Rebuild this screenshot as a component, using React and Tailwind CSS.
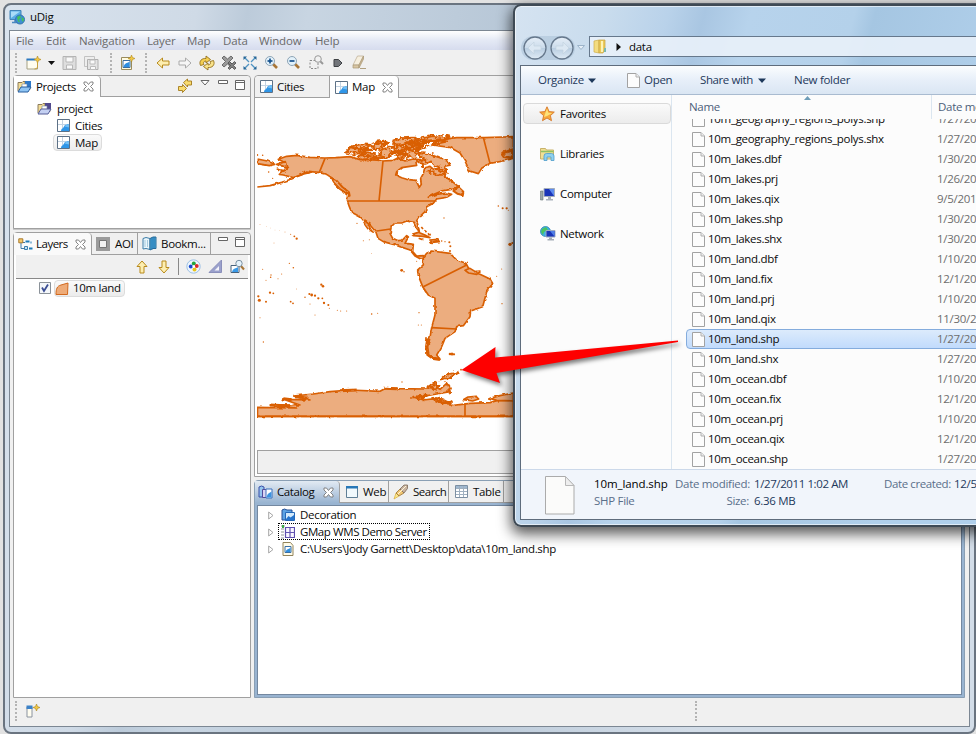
import React from "react";

/* ---------- icons ---------- */

function Svg({ w = 16, h = 16, children, className = "" }) {
  return (
    <svg width={w} height={h} viewBox={`0 0 ${w} ${h}`} fill="none" className={`shrink-0 ${className}`}>
      {children}
    </svg>
  );
}

const Logo = () => (
  <Svg>
    <path d="M1 1.500h11v9H1z" fill="#5aaee6" stroke="#4285b8" />
    <path d="M2 2.500h9L2 9z" fill="#a9dcf8" />
    <path d="M3 13.500h7M6 11v2" stroke="#4a88c0" strokeWidth="1.500" />
    <circle cx="11" cy="10.500" r="4.500" fill="#3f8fd4" stroke="#3474ae" />
    <path d="M8 8l3-1.500 1 2-2 2 1 3-2-1zM13 8l2 2-1 3-1.500-2z" fill="#41c25a" />
  </Svg>
);

const MapIcon = () => (
  <Svg w={13} h={13}>
    <path d="M.5.5h12v12H.5z" fill="#fff" stroke="#5d7186" />
    <path d="M1 5.500h8M5.500 1v8" stroke="#c3d3e2" />
    <path d="M4 12c.5-3 2-2.500 3-4.500S9 5.500 12 5v7z" fill="#2f96e8" />
    <path d="M7.500 7.500C8.500 6 9.500 5.500 12 5v3.500z" fill="#72bff5" />
  </Svg>
);

const ProjectIcon = ({ dim }) => (
  <Svg w={15} h={13}>
    <path d="M1 11V2.500h4l1-1h2v3h5v5" fill="#f4dd96" stroke="#8c7c5c" />
    <path d="M8 1h6v6H8z" fill={dim ? "#51498c" : "#2e79c8"} />
    <path d="M5 4h5v5H5z" fill="#fff" stroke="#7287a0" strokeWidth=".6" />
    <path d="M1 12l3-5h10L11 12z" fill={dim ? "#c4d0f2" : "#8fc5f4"} stroke={dim ? "#565e98" : "#285f9f"} />
  </Svg>
);

const CloseX = () => (
  <Svg w={11} h={11}>
    <path d="M1 1h2.500l2 2.500L7.500 1H10v2L7.500 5.500 10 8v2H7.500l-2-2.500L3.500 10H1V8l2.500-2.500L1 3z" fill="#fff" stroke="#777" strokeWidth=".9" />
  </Svg>
);

const MinIcon = () => (
  <Svg w={10} h={4}><path d="M.5.5h9v3h-9z" fill="#fff" stroke="#666" /></Svg>
);
const MaxIcon = () => (
  <Svg w={10} h={10}><path d="M.5.5h9v9h-9zM.5 2.500h9" fill="#fff" stroke="#666" /></Svg>
);

const NewIcon = () => (
  <Svg w={15} h={14}>
    <path d="M1 3.500h10.500v9.500H1z" fill="#fffdf0" stroke="#a5a184" />
    <path d="M.5 2.500h9v2h-9z" fill="#2b78c2" />
    <path d="M11.500 0l1 2.500 2.500 1-2.500 1-1 2.500-1-2.500-2.500-1 2.500-1z" fill="#f1c742" stroke="#b28a20" strokeWidth=".6" />
    <path d="M11.500 6v5q0 2-3 2" stroke="#c8a23e" />
  </Svg>
);
const Save = ({ multi }) => (
  <Svg w={15} h={14}>
    {multi && <path d="M.5.5h10v10H.5z" fill="#eee" stroke="#c2c2c2" />}
    {multi ? (
      <><path d="M3.500 3.500h10.500v10H3.500z" fill="#e4e4e4" stroke="#b0b0b0" /><path d="M6 4h5v4H6zM6.500 10.500h5v3h-5z" fill="#fafafa" stroke="#bcbcbc" /></>
    ) : (
      <><path d="M1 .5h13v13H1z" fill="#dedede" stroke="#b4b4b4" /><path d="M4 1h7v5H4zM4.500 9h6v4h-6z" fill="#fafafa" stroke="#b8b8b8" /></>
    )}
  </Svg>
);
const NewMap = () => (
  <Svg w={15} h={15}>
    <path d="M1.500 2.500h10v12h-10z" fill="#fffbe0" stroke="#9a8b5c" />
    <path d="M3 5.500h7v7H3z" fill="#fff" stroke="#3c6c9c" />
    <path d="M3.500 12c1-4 3-4 6-5v5z" fill="#2f8fe0" />
    <path d="M11.500 0l1 2.500 2.500 1-2.500 1-1 2.500-1-2.500-2.500-1 2.500-1z" fill="#f1c742" stroke="#b28a20" strokeWidth=".6" />
  </Svg>
);
const Arrow = ({ grey, right, up, down }) => (
  <Svg w={14} h={14}>
    <path
      d="M1 7l5.500-5v3H13v4H6.500v3z"
      fill={grey ? "#f6f6f6" : "#fdeeb0"}
      stroke={grey ? "#aaa" : "#b88a1c"}
      strokeLinejoin="round"
      transform={right ? "rotate(180 7 7)" : up ? "rotate(90 7 7)" : down ? "rotate(-90 7 7)" : undefined}
    />
  </Svg>
);
const Refresh = () => (
  <Svg>
    <path d="M1.500 10.500C-.5 6 3 3 7 3.500V1L11.500 4.500 7 8V6C4.500 6 4 8 5 9.500z" fill="#f5cf50" stroke="#94701c" strokeWidth=".9" />
    <path d="M14.500 5.500c2 4.500-1.500 7.500-5.500 7V15l-4.500-3.500L9 8v2c2.500 0 3-2 2-3.500z" fill="#f9e38a" stroke="#94701c" strokeWidth=".9" />
  </Svg>
);
const Stop = () => (
  <Svg>
    <path d="M1 3l2-2 3.500 3L10 1l2 2-3.500 3.500L12 10l-2 2-3.500-3L3 12l-2-2 3.500-3.500z" fill="#9a9a9a" stroke="#555" strokeWidth=".8" />
    <path d="M7 8l1.500-1.500L11 9l2.500-2.500L15 8l-2.500 2.500L15 13l-1.500 1.500L11 12l-2.500 2.500L7 13l2.500-2.500z" fill="#808080" stroke="#4c4c4c" strokeWidth=".8" />
  </Svg>
);
const Extent = () => (
  <Svg w={14} h={14}>
    <path d="M2 2l4 4M12 2L8 6M2 12l4-4M12 12L8 8" stroke="#4f93c2" strokeWidth="1.300" />
    <path d="M.5 4V.5H4zM10 .5h3.500V4zM.5 10v3.500H4zM10 13.500h3.500V10z" fill="#246596" />
  </Svg>
);
const Zoom = ({ minus }) => (
  <Svg w={15} h={15}>
    <path d="M9 9l4 4" stroke="#a87536" strokeWidth="2.600" />
    <circle cx="6" cy="6" r="4.500" fill="#e2f1fa" stroke="#8ea4b6" />
    <path d="M3.500 6h5" stroke="#15508c" strokeWidth="1.700" />
    {!minus && <path d="M6 3.500v5" stroke="#15508c" strokeWidth="1.700" />}
  </Svg>
);
const ZoomSel = () => (
  <Svg w={15} h={15}>
    <path d="M1 5.500h8v8H1z" stroke="#888" strokeDasharray="2 1.500" />
    <path d="M11 6l3 3" stroke="#999" strokeWidth="2" />
    <circle cx="9" cy="4" r="3.300" fill="#f2f2f2" stroke="#999" />
  </Svg>
);
const Tag = () => (
  <Svg w={10} h={10}><path d="M1 1.500h4.500L9 5 5.500 8.500H1z" fill="#72757a" stroke="#3e4145" /></Svg>
);
const Eraser = () => (
  <Svg w={16} h={15}>
    <path d="M5.500 1h6L7 10H1z" fill="#f6efdf" stroke="#b9aa90" strokeWidth=".7" />
    <path d="M1 10h6v3H1z" fill="#d9c6a4" stroke="#a99876" strokeWidth=".7" />
    <path d="M11.500 1v3L7 13v-3z" fill="#cbb894" stroke="#a99876" strokeWidth=".7" />
    <path d="M8 13.500h6" stroke="#b0a080" />
  </Svg>
);
const LinkArrows = () => (
  <Svg w={14} h={15}>
    <path d="M5.500 4.500L9.500 1v2h4v4h-4v2z" fill="#f9dc70" stroke="#a47a1c" strokeWidth=".9" />
    <path d="M8.500 10.500l-4 4v-2h-4v-4h4v-2z" fill="#f9dc70" stroke="#a47a1c" strokeWidth=".9" />
  </Svg>
);
const LayersIcon = () => (
  <Svg w={15} h={13}>
    <path d="M3 5v5.500h4M4 4.500h3" stroke="#3e79a8" />
    <path d="M.8.800h4v4h-4z" fill="#f7ca6c" stroke="#a8792c" />
    <path d="M7.500 3.500h4M12.500 4.500h1" stroke="#1e7ab6" strokeWidth="2" />
    <path d="M6.500 8.500h3v3h-3z" fill="#c5e4f5" stroke="#3c7dac" />
    <path d="M11 10.500h3.500" stroke="#1e7ab6" strokeWidth="2" />
  </Svg>
);
const AoiIcon = () => (
  <Svg w={14} h={14}><path d="M0 0h14v14H0z" fill="#9b9b9b" /><path d="M3.500 3.500h7v7h-7z" fill="#f3f3f3" stroke="#777" /></Svg>
);
const BookIcon = () => (
  <Svg w={15} h={15}>
    <path d="M1 2.500l3-1 4 1v11l-4-1-3 .5z" fill="#eaf6fc" stroke="#3c7da8" />
    <path d="M8 2.500l3-1.500h3v11.500h-3L8 14z" fill="#4eabdd" stroke="#286a98" />
    <path d="M10 1.500v12M12 1v11.500" stroke="#1f6fa8" /><path d="M3 4v7M5.500 4v7" stroke="#a5cade" />
  </Svg>
);
const Palette = () => (
  <Svg w={15} h={15}>
    <circle cx="7.500" cy="7.500" r="6.700" fill="#eef5fc" stroke="#9cc0e4" />
    <circle cx="4.800" cy="7.500" r="2" fill="#1747cf" /><circle cx="7.800" cy="4.500" r="2" fill="#22a53c" />
    <circle cx="10.700" cy="7" r="2" fill="#d92a2a" /><circle cx="8.500" cy="10.500" r="2" fill="#e8c418" />
    <circle cx="7.800" cy="7.500" r="1.300" fill="#fff" />
  </Svg>
);
const Ruler = () => (
  <Svg w={15} h={15}><path d="M1 13.500L13.500 1v12.500z" fill="#9aa0cc" stroke="#8a8fba" /><path d="M6.500 11.500L11 7v4.500z" fill="#f4f4fa" /></Svg>
);
const LayerZoom = () => (
  <Svg w={15} h={15}>
    <path d="M1 6.500h8v7H1z" fill="#fff" stroke="#47627c" /><path d="M2 13c1-4 3-3 6-5v5z" fill="#3a9ae8" />
    <path d="M10.500 6.500l3.500 4" stroke="#a87536" strokeWidth="2" /><circle cx="9" cy="4.500" r="3.200" fill="#e6f3fb" stroke="#788ea0" />
  </Svg>
);
const LandIcon = () => (
  <Svg w={14} h={13}><path d="M1 12.500C1 7 2 4 6 3l7-2-.5 11.500z" fill="#eeab78" stroke="#d2691e" /></Svg>
);
const CatalogIcon = () => (
  <Svg w={15} h={14}>
    <path d="M1 2q2.500-2 5 0v10H1z" fill="#93c5ee" stroke="#3a4fa8" />
    <path d="M4.500 4.500h5v8h-5z" fill="#d9d3f2" stroke="#524b9a" />
    <path d="M8 4h6v9H8z" fill="#fff" stroke="#3a6ebc" /><path d="M8.500 12.500c1-4 2-4 5-6v6z" fill="#3c93e0" />
  </Svg>
);
const WebIcon = () => (
  <Svg w={12} h={12}><path d="M.5.5h11v11H.5z" fill="#f1f9fd" stroke="#5f7f96" /><path d="M0 0h12v2.500H0z" fill="#2878b8" /></Svg>
);
const SearchIcon = () => (
  <Svg>
    <path d="M1 15l2-6 3 3z" fill="#fbe88c" stroke="#d8ac3a" strokeWidth=".7" />
    <path d="M3 9l4-4 4 4-5 3z" fill="#f0c674" stroke="#9a7432" strokeWidth=".8" />
    <path d="M7 5l4-4h3.500v3.500l-3.500 4.500z" fill="#c9b4a0" stroke="#7d6a58" strokeWidth=".8" />
    <path d="M5 10l8-8" stroke="#fff4d8" />
  </Svg>
);
const TableIcon = () => (
  <Svg w={13} h={13}>
    <path d="M.5.5h12v12H.5z" fill="#fff" stroke="#7c8fa2" /><path d="M1 1h11v2H1z" fill="#9fb8d0" />
    <path d="M1 3.500h11M1 6.500h11M1 9.500h11M4.500 1v11M8.500 1v11" stroke="#a0b0c0" />
  </Svg>
);
const DecoIcon = () => (
  <Svg w={14} h={13}>
    <path d="M1 2q2.500-2 5 0h5v10H1z" fill="#5ba2e4" stroke="#264f94" />
    <path d="M4.500 4.500h9v8h-9z" fill="#d3eafc" stroke="#2468b8" /><path d="M5 11l2.500-3 2 1.500L13 7v5H5z" fill="#2674cc" />
  </Svg>
);
const WmsIcon = () => (
  <Svg w={14} h={14}>
    <path d="M0 1h4M0 4h3M0 7h3M0 10h3M0 13h3" stroke="#8f9498" /><path d="M1 0h2v3H1z" fill="#3cac48" />
    <path d="M4.500 2.500h9v10h-9z" fill="#f8f5ff" stroke="#5d4fae" strokeWidth="1.200" /><path d="M9 3v9M5 7.500h8" stroke="#6456b4" strokeWidth="1.200" />
  </Svg>
);
const ShpIcon = () => (
  <Svg w={12} h={14}>
    <path d="M1 .5h7.500l2.500 3v10H1z" fill="#fffbe8" stroke="#92835a" /><path d="M3 4.500h6v6H3z" fill="#fff" stroke="#3a6ea4" />
    <path d="M3.500 10c1-3 3-3 5-4v4z" fill="#2f8fe0" />
  </Svg>
);
const Expander = () => (
  <Svg w={6} h={9} className="translate-y-px"><path d="M.7 1v7l4.300-3.500z" fill="#fff" stroke="#a5a5a5" /></Svg>
);
const FileIcon = () => (
  <Svg w={13} h={15}>
    <path d="M.5.5h8.500l3.500 3.500v10.500H.5z" fill="#fcfcfc" stroke="#a2a2a2" /><path d="M9 .5V4h3.500" fill="#eee" stroke="#b0b0b0" />
  </Svg>
);
const Star = () => (
  <Svg>
    <path d="M8 .8l2.100 4.800 5.200.5-3.900 3.500 1.100 5.100L8 12l-4.500 2.700 1.100-5.100L.7 6.100l5.200-.5z" fill="#f8a83c" stroke="#d5772a" strokeWidth=".9" />
    <path d="M8 2.500l1.300 4.200 4 .3L8 10 5 11l1-3z" fill="#fde27a" />
  </Svg>
);
const Libraries = () => (
  <Svg w={15} h={14}>
    <path d="M.5 12V1.500h5l1 1.500h7v9z" fill="#f1df94" stroke="#c8b26a" /><path d="M1 4.500h12.500" stroke="#8fc064" strokeWidth="1.500" />
    <path d="M4 13.500V9q0-2.500 2.500-2.500h5Q14 6.500 14 9v4.500h-3V10H7v3.500z" fill="#8fd0ee" stroke="#4f9dca" strokeWidth=".8" />
  </Svg>
);
const Computer = () => (
  <Svg w={15} h={14}>
    <path d="M.5 4h2.500v9H.5z" fill="#9ba7a8" stroke="#697577" strokeWidth=".6" /><path d="M4 1.500h10.500v8H4z" fill="#1a35b8" stroke="#a3adbb" />
    <path d="M9 2h5v7z" fill="#5d8cf0" /><path d="M8 10h3v2h2v1.500H6V12h2z" fill="#aab2bb" />
  </Svg>
);
const Network = () => (
  <Svg w={16} h={15}>
    <circle cx="5.500" cy="5.500" r="5" fill="#3db1e4" stroke="#2478a8" strokeWidth=".7" /><path d="M2 3l4-2 2 3-4 2-1 3-2-3z" fill="#4ac360" />
    <path d="M6 4.500h9v6.500H6z" fill="#1a35b8" stroke="#9dabc0" /><path d="M10 5h4.500v5.500z" fill="#4f7fe8" /><path d="M9 11.500h3v1.500h2v1.500H7.500V13H9z" fill="#a5adb8" />
  </Svg>
);
const FolderIcon = () => (
  <Svg w={14} h={15}>
    <path d="M1 2l5-1v13l-5-1z" fill="#f3dc80" stroke="#cfae48" strokeWidth=".7" /><path d="M6 1h6v9l-2 4H6z" fill="#eccb5c" stroke="#c5a23c" strokeWidth=".7" />
    <path d="M8 2h2v11H8z" fill="#fdf3b8" /><path d="M11 9h2v4h-2z" fill="#7cb8b0" />
  </Svg>
);
const Caret = ({ className }) => (
  <Svg w={8} h={5} className={className}><path d="M0 .5h8L4 5z" fill="currentColor" /></Svg>
);
const NavButton = ({ flip }) => (
  <Svg w={24} h={24} className="-mr-px">
    <defs>
      <linearGradient id="navg" x1="0" y1="0" x2="0" y2="1">
        <stop offset="0" stopColor="#e6eff8" /><stop offset=".48" stopColor="#ccdceb" /><stop offset=".5" stopColor="#b8cde1" /><stop offset="1" stopColor="#dfebf5" />
      </linearGradient>
    </defs>
    <circle cx="12" cy="12" r="11" fill="url(#navg)" stroke="#66788c" strokeWidth="1.300" />
    <path d="M5 12l6-6v4h7v4h-7v4z" fill="#dce8f3" stroke="#c3d2e0" strokeWidth=".7" transform={flip ? "rotate(180 12 12)" : undefined} />
  </Svg>
);

/* ---------- world map ---------- */

const DOTS = [
  [30, 298, 3], [50, 305, 2], [62, 309, 2], [75, 315, 2], [88, 317, 2], [105, 321, 3], [122, 328, 4], [133, 334, 7], [140, 341, 9], [72, 354, 3],
  [118, 415, 5], [130, 428, 6], [38, 433, 4], [95, 447, 4], [63, 450, 5], [455, 436, 11], [462, 440, 6], [365, 385, 3], [340, 347, 4], [358, 344, 4],
  [321, 295, 5], [348, 290, 9], [345, 286, 8], [745, 243, 6], [758, 250, 8], [770, 250, 9], [775, 256, 4], [582, 279, 5], [500, 409, 4], [780, 358, 13],
  [787, 354, 8], [755, 432, 4], [22, 90, 7], [38, 91, 6], [56, 141, 6], [68, 160, 5], [62, 457, 6], [48, 466, 4], [25, 514, 9], [28, 526, 12], [48, 530, 8],
  [60, 503, 9], [70, 505, 7], [84, 461, 4], [140, 492, 3], [165, 517, 6], [178, 507, 8], [185, 510, 11], [195, 512, 9], [205, 520, 9], [217, 520, 7], [222, 534, 9], [235, 540, 8],
  [122, 530, 7], [129, 535, 7], [180, 537, 4], [195, 570, 4], [30, 578, 4], [214, 479, 9], [219, 484, 10], [238, 550, 4], [262, 556, 4], [272, 558, 4], [290, 558, 4],
  [365, 567, 6], [383, 565, 4], [507, 563, 5], [505, 600, 4], [514, 600, 4], [40, 651, 5], [756, 536, 5], [740, 454, 4], [456, 771, 5],
  [600, 687, 10], [606, 687, 12], [612, 688, 9], [633, 734, 7], [598, 352, 8], [601, 364, 8], [600, 378, 8], [575, 348, 6], [585, 350, 5], [560, 347, 9], [552, 350, 8],
];

const COAST = [
  // North America
  "M85 103L110 94L140 91L180 97L224 99L260 98L300 95L330 104L365 103L398 108L430 106L445 98L465 108L490 102L512 104L498 112L500 121L480 124L455 128L440 140L437 150L455 158L470 163L498 166L508 187L514 178L512 160L520 146L524 128L540 124L552 134L575 138L582 148L592 160L605 168L622 182L620 190L600 194L575 198L552 208L535 217L560 208L590 204L605 208L590 217L560 222L550 235L530 245L525 260L508 276L500 287L505 305L508 320L497 305L490 292L470 288L455 294L435 294L424 305L420 325L428 340L445 347L458 345L470 332L475 336L465 355L490 358L488 380L500 393L520 392L526 402L512 402L495 393L480 375L450 365L430 358L400 350L384 340L378 322L360 300L340 285L330 275L305 262L298 245L292 228L297 208L270 185L255 165L230 148L205 142L170 138L155 150L130 158L100 150L88 148L100 138L115 127L85 120L100 110Z",
  // South America
  "M520 398L520 420L503 435L505 452L518 485L535 510L555 520L555 570L545 608L538 650L532 665L532 690L550 700L570 703L560 690L575 665L585 640L615 620L620 605L640 602L660 575L662 558L698 545L710 500L728 475L720 462L690 448L660 438L648 415L620 405L600 385L545 378L530 385Z",
  // Greenland
  "M545 60L600 67L630 84L645 108L655 130L660 138L685 146L695 130L720 115L760 108L790 100L790 35L700 38L620 38L560 46L590 50Z",
  // Antarctica
  "M22 847L140 849L60 840L150 840L100 823L180 825L130 813L190 807L240 800L300 795L390 799L410 788L440 791L530 792L545 780L570 793L590 775L598 785L600 800L560 807L500 817L520 825L560 820L590 830L605 842L660 835L720 833L740 827L790 825V874H22Z",
];

const ARCTIC = [
  "M285 82L300 66L320 72L340 66L352 74L338 84L310 86Z",
  "M305 64L330 58L360 60L352 68L325 70Z",
  "M320 96L345 84L380 88L420 92L402 104L370 100L335 104Z",
  "M365 62L385 54L402 58L395 70L375 72Z",
  "M378 50L400 47L414 54L396 58Z",
  "M388 76L404 70L420 74L424 88L408 98L392 90Z",
  "M430 46L450 40L490 38L515 44L505 54L470 52L450 60L434 56Z",
  "M430 66L448 60L462 70L450 82L434 78Z",
  "M436 92L458 86L466 96L450 102Z",
  "M505 42L545 34L600 34L585 44L550 52L530 50L515 58L498 54Z",
  "M462 60L490 56L512 64L500 76L476 76Z",
  "M468 84L490 80L505 88L492 98L474 96Z",
  "M508 84L540 88L570 98L596 110L600 120L580 124L592 140L570 130L552 118L530 108L515 98Z",
  "M504 108L520 104L534 116L516 122Z",
  "M535 138L560 130L585 146L562 152Z",
];

const WorldMap = () => (
  <svg width="256" height="347" viewBox="257 98 256 347" className="block shrink-0">
    <defs>
      <filter id="coast" x="-2%" y="-2%" width="104%" height="104%" colorInterpolationFilters="sRGB">
        <feTurbulence type="fractalNoise" baseFrequency="0.06" numOctaves="2" seed="7" />
        <feDisplacementMap in="SourceGraphic" scale="9" xChannelSelector="R" yChannelSelector="G" />
      </filter>
      <filter id="rough" x="-5%" y="-10%" width="110%" height="120%" colorInterpolationFilters="sRGB">
        <feTurbulence type="fractalNoise" baseFrequency="0.08" numOctaves="2" seed="11" />
        <feDisplacementMap in="SourceGraphic" scale="20" xChannelSelector="R" yChannelSelector="G" />
      </filter>
    </defs>
    <g transform="translate(250 125) scale(.33333)" fill="#ecad7f" stroke="#d95f02" strokeWidth="5" strokeLinejoin="round">
      <g filter="url(#coast)">
        {COAST.map((d) => <path key={d} d={d} />)}
        <path d="M534 640L530 665L534 688L550 700L570 703" fill="none" strokeWidth="10" />
        <path d="M22 102L52 108L74 118L58 122L22 116ZM80 118L106 110L110 126ZM80 132L108 138" />
        <path d="M22 186L60 182L95 172L125 162L155 148L190 140" fill="none" strokeWidth="5" />
        <path d="M243 160L257 164L277 186L297 202L299 212L270 192L252 174Z" strokeWidth="6" />
        <path d="M610 198L625 186L640 200L638 210L622 206Z" strokeWidth="6" />
        <path d="M757 85L785 75L790 99L765 96Z" strokeWidth="8" />
        <path d="M340 286L354 296L364 316L370 322L354 312L342 296Z" strokeWidth="4" />
        <path d="M486 328L505 322L525 330L540 338L518 334L490 332ZM540 345L562 343L568 350L545 352ZM506 340L518 344" strokeWidth="5" />
        <path d="M514 306L522 316L534 324L540 334" fill="none" strokeWidth="5" strokeDasharray="8 6" />
        <path d="M645 436L660 430L676 440L690 438L680 448L656 444Z" />
        <path d="M640 824L654 816L678 814L686 822L668 828ZM720 820L750 812L790 804V828L740 826Z" />
        <path d="M60 840L120 843M100 821L125 824M135 815L175 820M400 790L440 791M530 785L560 788M270 797L320 795" strokeWidth="9" />
      </g>
      <g filter="url(#rough)">
        {ARCTIC.map((d) => <path key={d} d={d} strokeWidth="6" />)}
        <path d="M445 60L500 48M460 72L505 60M475 50L500 78M440 74L470 90M500 74L540 62M515 66L500 90M335 92L400 98M320 78L380 74M410 64L440 70M425 84L470 78M500 50L590 42M530 44L500 72" strokeWidth="7" />
        <path d="M535 784L555 774L568 782L556 792ZM568 766L584 752L605 744L622 742L604 756L582 764ZM490 816L530 812L520 822ZM550 822L585 828L602 836L574 834ZM590 772L602 790L596 804" strokeWidth="7" />
      </g>
      {DOTS.map(([x, y, r]) => <circle key={`${x}-${y}`} cx={x} cy={y} r={r / 2.6} fill="#d95f02" stroke="none" />)}
      <path d="M225 100l-17 42M399 108l-12 120M292 228h264M380 318l42-6M700 37l20 78M520 485L650 420M545 608l75 4M645 838v37M22 874h768M22 847v27" fill="none" />
    </g>
  </svg>
);

/* ---------- building blocks ---------- */

const Grip = ({ className = "" }) => (
  <div className={`w-0.5 shrink-0 border-l-2 border-dotted border-[#b4b4b4] ${className}`} />
);

const FILES = [
  ["10m_geography_regions_polys.shp", "1/27/2011"],
  ["10m_geography_regions_polys.shx", "1/27/2011"],
  ["10m_lakes.dbf", "1/30/2011"],
  ["10m_lakes.prj", "1/26/2011"],
  ["10m_lakes.qix", "9/5/2011"],
  ["10m_lakes.shp", "1/30/2011"],
  ["10m_lakes.shx", "1/30/2011"],
  ["10m_land.dbf", "1/10/2011"],
  ["10m_land.fix", "12/1/2011"],
  ["10m_land.prj", "1/10/2011"],
  ["10m_land.qix", "11/30/2011"],
  ["10m_land.shp", "1/27/2011"],
  ["10m_land.shx", "1/27/2011"],
  ["10m_ocean.dbf", "1/10/2011"],
  ["10m_ocean.fix", "12/1/2011"],
  ["10m_ocean.prj", "1/10/2011"],
  ["10m_ocean.qix", "12/1/2011"],
  ["10m_ocean.shp", "1/27/2011"],
];

const MENU = [
  ["File", "w-[30px]"], ["Edit", "w-[33px]"], ["Navigation", "w-[68px]"], ["Layer", "w-[40px]"],
  ["Map", "w-[36px]"], ["Data", "w-[36px]"], ["Window", "w-[56px]"], ["Help", "w-[40px]"],
];

function ProjectsPanel() {
  return (
    <section className="flex h-[154px] flex-col rounded-t border border-[#a0a0a0] bg-white shadow-[0_1px_0_#c8c8c8]">
      <div className="flex h-[21px] shrink-0 rounded-t bg-[#f0f0f0]">
        <div className="flex w-[87px] items-center rounded-tr border-r border-[#a0a0a0] bg-white pl-[3px]">
          <ProjectIcon />
          <span className="ml-1 w-[47px] tracking-[-0.4px]">Projects</span>
          <CloseX />
        </div>
        <div className="flex flex-1 items-start border-b border-[#a0a0a0] pl-[77px]">
          <div className="mt-0.5 w-[22px]"><LinkArrows /></div>
          <div className="mt-[4px] w-[18px]"><Svg w={10} h={6}><path d="M1 .5h8L5 5z" fill="#fff" stroke="#666" /></Svg></div>
          <div className="mt-1 w-[17px]"><MinIcon /></div>
          <div className="mt-[4px]"><MaxIcon /></div>
        </div>
      </div>
      <div className="flex flex-col pt-[3px]">
        <div className="flex h-[17px] items-center pl-[23px]"><ProjectIcon dim /><span className="ml-[5px]">project</span></div>
        <div className="flex h-[17px] items-center pl-[43px]"><MapIcon /><span className="ml-[5px]">Cities</span></div>
        <div className="flex h-[17px] items-center pl-[39px]">
          <div className="flex h-[17px] w-[49px] items-center rounded border border-[#dcdcdc] bg-gradient-to-b from-[#fafafa] to-[#ececec] pl-[3px]">
            <MapIcon /><span className="ml-[5px]">Map</span>
          </div>
        </div>
      </div>
    </section>
  );
}

function LayersPanel() {
  return (
    <section className="mt-[3px] flex min-h-0 flex-1 flex-col rounded-t border border-[#a0a0a0] bg-white">
      <div className="flex h-[22px] shrink-0 rounded-t bg-[#f0f0f0]">
        <div className="flex w-[78px] items-center rounded-tr border-r border-[#a0a0a0] bg-[#fafafa] pl-[4px]">
          <LayersIcon /><span className="ml-[3px] w-[39px] tracking-[-0.5px]">Layers</span><CloseX />
        </div>
        <div className="flex w-[46px] items-center border-r border-b border-[#a0a0a0] pl-[4px]"><AoiIcon /><span className="ml-[5px]">AOI</span></div>
        <div className="flex w-[73px] items-center border-r border-b border-[#a0a0a0] pl-[4px]"><BookIcon /><span className="ml-[4px]">Bookm...</span></div>
        <div className="flex flex-1 items-start border-b border-[#a0a0a0] pl-[7px]">
          <div className="mt-1 w-[17px]"><MinIcon /></div><div className="mt-[4px]"><MaxIcon /></div>
        </div>
      </div>
      <div className="mx-[2px] flex h-6 shrink-0 items-center border-b border-[#888] bg-[#f0f0f0] pl-[119px]">
        <div className="w-[22px]"><Arrow up /></div>
        <div className="w-[21px]"><Arrow down /></div>
        <div className="mr-[7px] h-[17px] w-px bg-[#888]" />
        <div className="w-[22px]"><Palette /></div>
        <div className="w-[22px]"><Ruler /></div>
        <LayerZoom />
      </div>
      <div className="flex h-[18px] items-center pl-[25px]">
        <Svg w={12} h={12}><path d="M.5.5h11v11H.5z" fill="#f4f7fa" stroke="#8b9299" /><path d="M3 5.500l2 3.500 4-6.500" stroke="#3b4e94" strokeWidth="1.800" /></Svg>
        <div className="ml-[3px] flex h-[17px] w-[71px] items-center rounded border border-[#dcdcdc] bg-gradient-to-b from-[#fafafa] to-[#ececec]">
          <LandIcon /><span className="ml-[4px] whitespace-nowrap">10m land</span>
        </div>
      </div>
    </section>
  );
}

function EditorPanel() {
  return (
    <section className="flex h-[402px] flex-col rounded-t border border-[#a0a0a0] bg-white">
      <div className="flex h-[22px] shrink-0 rounded-t bg-[#f0f0f0]">
        <div className="flex w-[75px] items-center border-r border-b border-[#a0a0a0] pl-[5px]"><MapIcon /><span className="ml-[4px]">Cities</span></div>
        <div className="flex w-[69px] items-center rounded-tr border-r border-[#a0a0a0] bg-white pl-[5px]">
          <MapIcon /><span className="ml-[4px] w-[30px]">Map</span><CloseX />
        </div>
        <div className="flex-1 border-b border-[#a0a0a0]" />
      </div>
      <div className="flex flex-1 flex-col px-[2px]">
        <WorldMap />
      </div>
      <div className="mx-[2px] mb-[2px] h-[24px] shrink-0 border border-[#a0a0a0] bg-[#f0f0f0]" />
    </section>
  );
}

function CatalogPanel() {
  return (
    <section className="mt-[3px] flex min-h-0 flex-1 flex-col rounded-t border border-[#8a9fb4] bg-[#99b4d1]">
      <div className="flex h-[22px] shrink-0 rounded-t bg-[#f0f0f0]">
        <div className="flex w-[85px] items-center rounded-tr border-r border-[#a0a0a0] bg-gradient-to-b from-[#e2eaf3] to-[#99b4d1] pl-[3px]">
          <CatalogIcon /><span className="ml-[4px] w-[46px] tracking-[-0.4px]">Catalog</span><CloseX />
        </div>
        <div className="flex w-[49px] items-center border-r border-b border-[#a0a0a0] pl-[6px]"><WebIcon /><span className="ml-[5px]">Web</span></div>
        <div className="flex w-[60px] items-center border-r border-b border-[#a0a0a0] pl-[4px]"><SearchIcon /><span className="ml-[4px] tracking-[-0.5px]">Search</span></div>
        <div className="flex w-[55px] items-center border-r border-b border-[#a0a0a0] pl-[6px]"><TableIcon /><span className="ml-[5px]">Table</span></div>
        <div className="flex-1 border-b border-[#a0a0a0]" />
      </div>
      <div className="mx-[2px] mt-[2px] mb-[2px] flex flex-1 flex-col border border-[#7488a0] bg-white">
        <div className="flex h-[17px] items-center pl-[10px]"><Expander /><span className="w-[7px]" /><DecoIcon /><span className="ml-[5px]">Decoration</span></div>
        <div className="flex h-[17px] items-center pl-[10px]">
          <Expander />
          <div className="ml-[4px] flex h-[17px] w-[152px] items-center border border-dotted border-black pl-[2px]"><WmsIcon /><span className="ml-[5px] tracking-[-0.42px] whitespace-nowrap">GMap WMS Demo Server</span></div>
        </div>
        <div className="flex h-[17px] items-center pl-[10px]"><Expander /><span className="w-[8px]" /><ShpIcon /><span className="ml-[6px] tracking-[-0.34px] whitespace-nowrap">C:\Users\Jody Garnett\Desktop\data\10m_land.shp</span></div>
      </div>
    </section>
  );
}

function Explorer() {
  return (
    <div className="absolute top-[4px] left-[513px] flex h-[523px] w-[480px] flex-col rounded-lg border-2 border-[#3f4a55] bg-[linear-gradient(105deg,#d5e3f1_0px,#c9dced_90px,#b9d2ea_150px,#a9c6e2_185px,#b7d3ec_230px,#b4d1ea_330px,#a5c6e2_350px,#b0cfea_480px)] px-[5px] pb-[5px] shadow-[0_5px_14px_2px_rgba(0,0,0,0.65),inset_0_0_0_1px_rgba(255,255,255,0.6)]">
      <div className="flex h-[59px] shrink-0 items-start pt-[30px]">
        <div className="ml-px flex w-[54px] shrink-0 rounded-full bg-[#a5bdd4]/50 pl-[2px]"><NavButton /><div className="ml-1"><NavButton flip /></div></div>
        <Svg w={8} h={5} className="mt-[9px] ml-[2px]"><path d="M.5.5h7L4 4.500z" fill="#e6eff7" stroke="#9db4ca" /></Svg>
        <div className="ml-[4px] flex h-[21px] w-[420px] shrink-0 items-center border border-[#66788c] bg-[#e9f1f9]/90 pl-[3px]">
          <FolderIcon />
          <Svg w={5} h={8} className="ml-[9px]"><path d="M.5 0v8L5 4z" fill="#111" /></Svg>
          <span className="ml-[8px]">data</span>
        </div>
      </div>
      <div className="flex min-h-0 w-[480px] flex-1 flex-col border border-[#5e6c7c] bg-[#fcfcfc]">
        <div className="flex h-[29px] shrink-0 items-center border-b border-[#a9bbd0] bg-gradient-to-b from-[#fbfdfe] via-[#e7eff9] to-[#dae6f3] pl-[17px] tracking-[-0.28px] text-[#1e395b]">
          <span className="w-[50px]">Organize</span><Caret />
          <div className="ml-[31px]"><FileIcon /></div>
          <span className="ml-[4px] w-[56px]">Open</span>
          <span className="w-[58px] tracking-[-0.4px]">Share with</span><Caret />
          <span className="ml-[28px]">New folder</span>
        </div>
        <div className="flex min-h-0 flex-1">
          <nav className="flex w-[151px] shrink-0 flex-col border-r border-[#dbe6f0] pt-[8px]">
            <div className="ml-[2px] flex h-[21px] w-[148px] items-center rounded-sm border border-[#dadada] bg-gradient-to-b from-[#fafafa] to-[#ececec] pl-[15px]"><Star /><span className="ml-[5px]">Favorites</span></div>
            <div className="mt-[19px] flex h-[21px] items-center pl-[19px]"><Libraries /><span className="ml-[5px]">Libraries</span></div>
            <div className="mt-[19px] flex h-[21px] items-center pl-[19px]"><Computer /><span className="ml-[5px]">Computer</span></div>
            <div className="mt-[19px] flex h-[21px] items-center pl-[19px]"><Network /><span className="ml-[4px]">Network</span></div>
          </nav>
          <div className="flex min-w-0 flex-1 flex-col">
            <div className="flex h-[24px] shrink-0 text-[#4c607a]">
              <div className="flex w-[260px] shrink-0 items-center border-r border-[#dbe6f0] pl-[17px]">
                <span className="w-[115px]">Name</span>
                <Svg w={7} h={4} className="mt-px self-start"><path d="M0 4l3.500-4L7 4z" fill="#6e9db8" /></Svg>
              </div>
              <span className="flex items-center pl-[6px] whitespace-nowrap">Date modified</span>
            </div>
            <div className="flex min-h-0 flex-1 flex-col overflow-hidden">
              <div className="-mt-[10px] flex flex-col">
                {FILES.map(([name, date], i) => (
                  <div
                    key={name}
                    className={
                      i === 11
                        ? "ml-[14px] flex h-5 shrink-0 items-center rounded-sm border border-[#84acdd] bg-gradient-to-b from-[#dcebfc] to-[#c1dbfc] pl-[5px]"
                        : "ml-[15px] flex h-5 shrink-0 items-center pl-[5px]"
                    }
                  >
                    <FileIcon />
                    <span className="ml-[3px] w-[229px] shrink-0">{name}</span>
                    <span className="whitespace-nowrap text-[#6d6d6d]">{date}</span>
                  </div>
                ))}
              </div>
            </div>
          </div>
        </div>
        <div className="flex h-[50px] shrink-0 border-t border-[#ccd9ea] bg-[#f1f5fb] pt-[6px] pl-[24px] text-[#5a6f8a]">
          <Svg w={30} h={39}><path d="M.5.5h20l8.500 9v28.500H.5z" fill="#fbfbfa" stroke="#ababab" /><path d="M20.500.5v9H29z" fill="#eee" stroke="#b8b8b8" /></Svg>
          <div className="-mt-px ml-[19px] grid w-[382px] shrink-0 grid-cols-[81px_74px_132px_73px_60px] grid-rows-[17px_17px] items-center whitespace-nowrap">
            <span className="tracking-[-0.1px] text-black">10m_land.shp</span>
            <span className="text-right">Date modified:</span>
            <span className="pl-[5px] tracking-[-0.4px] text-[#1e395b]">1/27/2011 1:02 AM</span>
            <span className="pl-[3px] tracking-[-0.4px]">Date created:</span>
            <span className="text-[#1e395b]">12/5/2011</span>
            <span>SHP File</span>
            <span className="text-right">Size:</span>
            <span className="pl-[5px] text-[#1e395b]">6.36 MB</span>
          </div>
        </div>
      </div>
    </div>
  );
}

export default function App() {
  return (
    <div className="relative h-[734px] w-[976px] overflow-hidden bg-[#e2e2e2] pt-[3px] pl-[3px] font-['Open_Sans','Noto_Sans',sans-serif] text-[11.5px] leading-none tracking-[-0.3px] text-[#0a0a0a]">
      <div className="flex h-[731px] w-[973px] flex-col rounded-tl-lg rounded-b-lg border-2 border-[#6a7480] bg-[linear-gradient(100deg,#d9e3ee_0px,#cfdae6_190px,#bccbda_240px,#c8d5e2_300px,#b6c6d6_520px,#d3dde8_800px)] px-[4px] pb-[5px]">
        <div className="flex h-[25px] shrink-0 items-center pb-[2px]"><Logo /><span className="ml-[5px]">uDig</span></div>
        <div className="flex min-h-0 flex-1 flex-col border border-[#7c8793] bg-[#f0f0f0]">
          <div className="flex h-[19px] shrink-0 items-center bg-gradient-to-b from-white via-[#e4e9f5] to-[#d6dcee] pl-[6px] text-[#6a6a6a]">
            {MENU.map(([label, w]) => <span key={label} className={`${w} shrink-0 tracking-[-0.15px]`}>{label}</span>)}
          </div>
          <div className="flex h-[25px] shrink-0 items-center pl-[5px]">
            <Grip className="mr-[9px] h-[20px]" />
            <div className="w-[22px]"><NewIcon /></div>
            <Svg w={7} h={4} className="mr-[7px]"><path d="M0 0h7L3.500 4z" fill="#111" /></Svg>
            <div className="w-[22px]"><Save /></div>
            <div className="w-[26px]"><Save multi /></div>
            <Grip className="mr-[8px] h-[20px]" />
            <div className="w-[25px]"><NewMap /></div>
            <Grip className="mr-[9px] h-[20px]" />
            <div className="w-[22px]"><Arrow /></div>
            <div className="w-[21px]"><Arrow grey right /></div>
            <div className="w-[22px]"><Refresh /></div>
            <div className="w-[22px]"><Stop /></div>
            <div className="w-[21px]"><Extent /></div>
            <div className="w-[22px]"><Zoom /></div>
            <div className="w-[23px]"><Zoom minus /></div>
            <div className="w-[24px]"><ZoomSel /></div>
            <div className="w-[19px]"><Tag /></div>
            <Eraser />
          </div>
          <div className="flex min-h-0 flex-1 pr-[4px] pl-[3px]">
            <div className="flex w-[238px] shrink-0 flex-col"><ProjectsPanel /><LayersPanel /></div>
            <div className="ml-[3px] flex min-w-0 flex-1 flex-col"><EditorPanel /><CatalogPanel /></div>
          </div>
          <div className="flex h-[28px] shrink-0 items-center pb-[2px] pl-[5px]">
            <Grip className="h-[20px]" />
            <div className="ml-[9px] w-[669px]">
              <Svg w={14} h={14}><path d="M1 3h5v10H1z" fill="#fffdf0" stroke="#8a93a0" /><path d="M.5 1.500h6V5h-6z" fill="#3c82c8" /><path d="M10.500 0l1 2.500 2.500 1-2.500 1-1 2.500-1-2.500-2.500-1 2.500-1z" fill="#f1c742" stroke="#a8841e" strokeWidth=".6" /></Svg>
            </div>
            <Grip className="h-[20px]" />
          </div>
        </div>
      </div>

      <Explorer />

      <svg width="230" height="50" viewBox="458 338 230 50" className="absolute top-[338px] left-[458px] drop-shadow-[2px_3px_2px_rgba(0,0,0,0.5)]">
        <path d="M678 340.500L495 357.500 495.500 347 461.500 370 500 383 496.500 373 678 342z" fill="#fe0000" />
      </svg>
    </div>
  );
}
